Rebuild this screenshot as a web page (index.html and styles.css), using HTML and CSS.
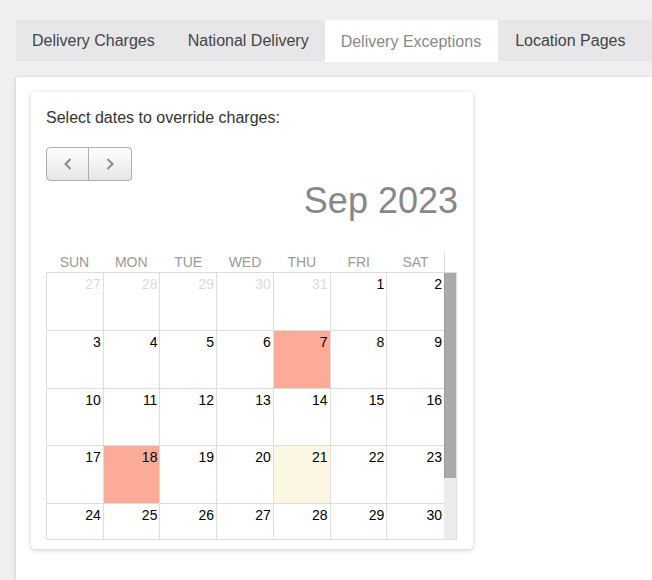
FILE: index.html
```html
<!DOCTYPE html>
<html lang="en">
<head>
<meta charset="utf-8">
<title>Delivery Exceptions</title>
<link rel="stylesheet" href="styles.css">
</head>
<body>
<div class="page">
  <nav class="tabs">
    <a class="tab">Delivery Charges</a>
    <a class="tab">National Delivery</a>
    <a class="tab active">Delivery Exceptions</a>
    <a class="tab">Location Pages</a>
  </nav>
  <main class="panel">
    <section class="card">
      <p class="intro">Select dates to override charges:</p>
      <div class="btn-group">
        <button class="btn" aria-label="Previous month">
          <svg width="10" height="12" viewBox="0 0 10 12"><path d="M7.5 1 L2.5 6 L7.5 11" fill="none" stroke="#8a8a8a" stroke-width="2"/></svg>
        </button>
        <button class="btn" aria-label="Next month">
          <svg width="10" height="12" viewBox="0 0 10 12"><path d="M2.5 1 L7.5 6 L2.5 11" fill="none" stroke="#8a8a8a" stroke-width="2"/></svg>
        </button>
      </div>
      <h2 class="title">Sep 2023</h2>
      <div class="dow">
        <span>SUN</span><span>MON</span><span>TUE</span><span>WED</span><span>THU</span><span>FRI</span><span>SAT</span>
      </div>
      <div class="scroller">
        <div class="viewport">
          <div class="grid">
            <div class="day other">27</div><div class="day other">28</div><div class="day other">29</div><div class="day other">30</div><div class="day other">31</div><div class="day">1</div><div class="day">2</div>
            <div class="day">3</div><div class="day">4</div><div class="day">5</div><div class="day">6</div><div class="day override">7</div><div class="day">8</div><div class="day">9</div>
            <div class="day">10</div><div class="day">11</div><div class="day">12</div><div class="day">13</div><div class="day">14</div><div class="day">15</div><div class="day">16</div>
            <div class="day">17</div><div class="day override">18</div><div class="day">19</div><div class="day">20</div><div class="day today">21</div><div class="day">22</div><div class="day">23</div>
            <div class="day">24</div><div class="day">25</div><div class="day">26</div><div class="day">27</div><div class="day">28</div><div class="day">29</div><div class="day">30</div>
          </div>
        </div>
        <div class="scrollbar"><div class="thumb"></div></div>
      </div>
    </section>
  </main>
</div>
</body>
</html>
```

FILE: styles.css
```css
* { box-sizing: border-box; }

html, body {
  margin: 0;
  height: 100%;
  overflow: hidden;
}

body {
  background: #efeff1;
  font-family: "Liberation Sans", Arial, sans-serif;
  color: #333;
}

.page {
  padding: 20px 0 0 16px;
  height: 100%;
  display: flex;
  flex-direction: column;
}

.tabs {
  display: flex;
  height: 41px;
  background: #e7e7ea;
  align-items: flex-start;
}

.tab {
  display: block;
  height: 41px;
  line-height: 41px;
  padding: 0 16px;
  margin-right: 1px;
  font-size: 16px;
  color: #444;
  white-space: nowrap;
}

.tab.active {
  background: #fff;
  color: #888;
  height: 42px;
  line-height: 43px;
  border-radius: 3px 3px 0 0;
  padding: 0 17px 0 16px;
  margin-left: -1px;
}

.panel {
  margin-top: 16px;
  flex: 1;
  background: #fff;
  border-radius: 3px 0 0 0;
  box-shadow: -1px 0 3px rgba(0, 0, 0, 0.12);
  padding: 15px;
}

.card {
  width: 442px;
  background: #fff;
  border-radius: 4px;
  box-shadow: 0 1px 5px rgba(0, 0, 0, 0.22);
  padding: 15px 15px 9px 15px;
}

.intro {
  margin: 0;
  font-size: 16px;
  line-height: 22px;
  color: #333;
}

.btn-group {
  display: flex;
  margin-top: 18px;
  width: 86px;
  height: 34px;
}

.btn {
  width: 43px;
  height: 34px;
  padding: 0;
  margin: 0;
  border: 1px solid #adadad;
  background: linear-gradient(#ffffff, #e6e6e6);
  display: flex;
  align-items: center;
  justify-content: center;
}

.btn:first-child {
  border-radius: 4px 0 0 4px;
}

.btn:last-child {
  border-left: none;
  border-radius: 0 4px 4px 0;
}

.title {
  margin: 0;
  text-align: right;
  font-size: 36px;
  line-height: 40px;
  font-weight: normal;
  color: #888;
}

.dow {
  margin-top: 31px;
  width: 399px;
  height: 20px;
  border-right: 1px solid #ddd;
  display: grid;
  grid-template-columns: repeat(7, 1fr);
  font-size: 14px;
  line-height: 20px;
  color: #9a9a9a;
  text-align: center;
}

.scroller {
  width: 411px;
  height: 268px;
  border: 1px solid #ddd;
  display: flex;
}

.viewport {
  flex: 1;
  overflow: hidden;
}

.scrollbar {
  width: 12px;
  background: #ececec;
}

.thumb {
  height: 205px;
  background: #aaaaaa;
  border-left: 1px solid #9c9c9c;
}

.grid {
  display: grid;
  grid-template-columns: repeat(7, 1fr);
  grid-template-rows: repeat(5, 57.75px) 57.75px;
}

.day {
  border-right: 1px solid #ddd;
  border-bottom: 1px solid #ddd;
  text-align: right;
  padding: 3px 2px 0 0;
  font-size: 14px;
  line-height: 16px;
  color: #000;
}

.day:nth-child(7n) {
  border-right: none;
}

.day.other {
  color: #dcdcdc;
}

.day.override {
  background: #fcab98;
}

.day.today {
  background: #fcf7e3;
}
```
